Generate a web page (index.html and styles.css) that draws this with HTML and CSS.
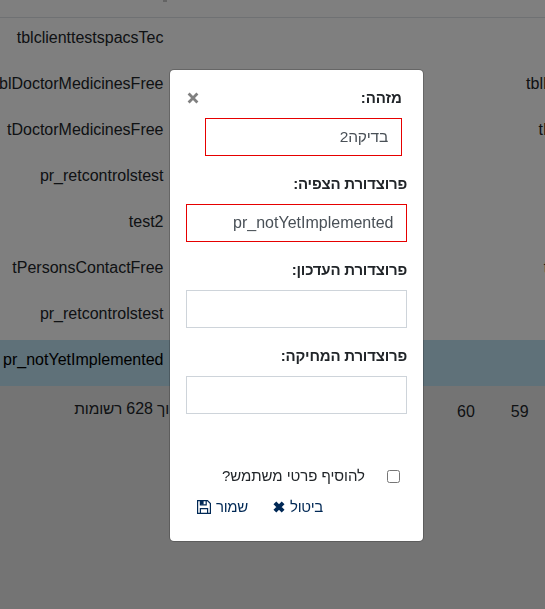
FILE: index.html
```html
<!DOCTYPE html>
<html lang="he">
<head>
<meta charset="utf-8">
<title>פרוצדורות</title>
<link rel="stylesheet" href="styles.css">
</head>
<body>
<main class="page">
  <div class="head"><span class="sort"></span></div>
  <div class="row"><span>tblclienttestspacsTec</span><span></span></div>
  <div class="row"><span>tblDoctorMedicinesFree</span><span>tblDoctorMedicinesFree</span></div>
  <div class="row"><span>tDoctorMedicinesFree</span><span>tDoctorMedicinesFree</span></div>
  <div class="row"><span>pr_retcontrolstest</span><span></span></div>
  <div class="row"><span>test2</span><span></span></div>
  <div class="row"><span>tPersonsContactFree</span><span>tPersonsContactFree</span></div>
  <div class="row"><span>pr_retcontrolstest</span><span></span></div>
  <div class="row selected"><span>pr_notYetImplemented</span><span></span></div>
  <footer class="foot">
    <span class="count" dir="rtl">וך <span class="num">628</span> רשומות</span>
    <nav class="pages"><span>60</span><span>59</span></nav>
  </footer>
</main>
<div class="overlay">
  <form class="modal" dir="rtl">
    <div class="top">
      <label class="label" for="id">מזהה:</label>
      <button class="close" type="button" aria-label="סגירה"><svg width="12" height="12" viewBox="0 0 12 12"><path d="M1.6 1.6l8.8 8.8M10.4 1.6l-8.8 8.8"/></svg></button>
    </div>
    <input class="field short invalid" id="id" value="בדיקה2">
    <label class="label" for="view">פרוצדורת הצפיה:</label>
    <input class="field latin invalid" id="view" value="pr_notYetImplemented">
    <label class="label" for="update">פרוצדורת העדכון:</label>
    <input class="field" id="update">
    <label class="label" for="delete">פרוצדורת המחיקה:</label>
    <input class="field" id="delete">
    <label class="check"><input type="checkbox"><span>להוסיף פרטי משתמש?</span></label>
    <div class="actions">
      <a class="action"><span>ביטול</span><svg class="x" width="12" height="12" viewBox="0 0 12 12"><path d="M1.9 1.9l8.2 8.2M10.1 1.9l-8.2 8.2"/></svg></a>
      <a class="action save"><span>שמור</span><svg class="disk" width="14" height="14" viewBox="0 0 14 14"><path d="M.6 .6H10.5L13.4 3.5V13.4H.6zM3.4 13V8.6h7.2V13M3.4 1v3.9h5.8V1"/><path class="fill" d="M3.4 1h3.2v3.6H3.4z"/></svg></a>
    </div>
  </form>
</div>
</body>
</html>
```
FILE: styles.css
```css
* { box-sizing: border-box; }
body {
  margin: 0;
  height: 609px;
  overflow: hidden;
  background: #e9e9e9;
  color: #212529;
  font: 16px/24px "Liberation Sans", Arial, sans-serif;
}
.page { height: 609px; overflow: hidden; }
.head {
  height: 18px;
  background: #fff;
  border-bottom: 1px solid #dee2e6;
}
.sort {
  display: block;
  width: 4px;
  height: 2px;
  margin-left: 163px;
  background: #c8c8c8;
}
.row {
  display: grid;
  grid-template-columns: 163.5px 531.5px;
  width: 695px;
  height: 46px;
  padding-top: 8px;
  background: #fff;
  white-space: nowrap;
}
.row span { justify-self: end; }
.selected { background: #bfe2f2; color: #000; }
.foot { display: flex; padding-top: 11px; }
.count {
  width: 169px;
  font-size: 15.5px;
  letter-spacing: -.2px;
  white-space: nowrap;
}
.num { font-size: 16px; letter-spacing: 0; }
.pages { display: flex; gap: 36px; padding-top: 3px; margin-left: 288px; }
.overlay {
  position: fixed;
  inset: 0;
  background: rgba(0, 0, 0, .5);
  padding: 69px 0 0 169px;
}
.modal {
  display: flex;
  flex-direction: column;
  width: 255px;
  height: 473px;
  padding: 17px 16px 0;
  background: #fff;
  background-clip: padding-box;
  border: 1px solid rgba(0, 0, 0, .2);
  border-radius: 5px;
}
.top {
  display: flex;
  justify-content: space-between;
  align-items: center;
  height: 24px;
  padding: 0 5px 2px 1px;
}
.label {
  height: 24px;
  font-size: 15px;
  font-weight: 700;
  letter-spacing: -.2px;
  white-space: nowrap;
}
.top .label { letter-spacing: 0; }
.close { display: flex; padding: 0; border: 0; background: none; }
.close svg { stroke: #808080; stroke-width: 2.8; }
.field {
  width: 221px;
  height: 38px;
  margin: 8px 0 16px;
  padding: 6px 13px;
  border: 1px solid #ced4da;
  border-radius: 0;
  background: #fff;
  color: #495057;
  font: inherit;
}
.field.latin { padding-right: 12.5px; }
.field.short { width: 197px; margin-right: 5px; margin-top: 7px; font-size: 15.5px; letter-spacing: -.2px; }
.field.invalid { border-color: #e60000; }
.check {
  display: flex;
  align-items: center;
  height: 24px;
  margin-top: 34px;
  padding-right: 7px;
  gap: 22px;
  font-size: 15px;
  letter-spacing: -.05px;
}
.check input { width: 13px; height: 13px; margin: 0; }
.actions {
  display: flex;
  gap: 25px;
  padding: 7px 84px 0 0;
  font-size: 15px;
  letter-spacing: -.3px;
  white-space: nowrap;
}
.action { display: flex; align-items: center; gap: 5px; color: #002855; }
.x { stroke: #002855; stroke-width: 4; }
.disk { fill: none; stroke: #002855; stroke-width: 1.2; }
.disk .fill { fill: #002855; stroke: none; }
```
